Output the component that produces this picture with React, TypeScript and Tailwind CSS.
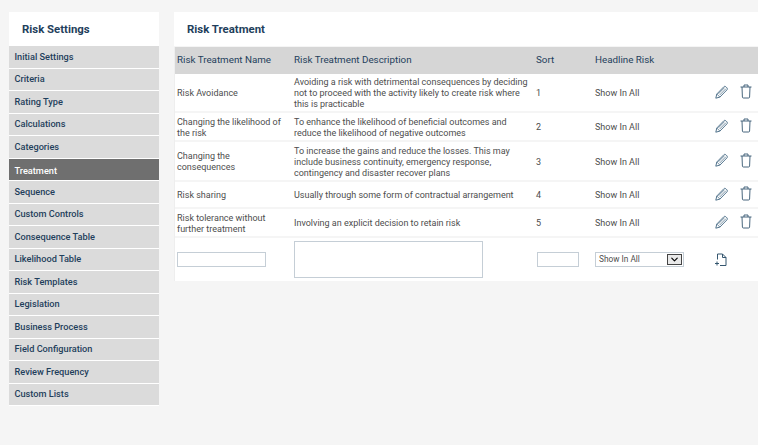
import { ChevronDown } from "lucide-react";

const settings = [
  "Initial Settings",
  "Criteria",
  "Rating Type",
  "Calculations",
  "Categories",
  "Treatment",
  "Sequence",
  "Custom Controls",
  "Consequence Table",
  "Likelihood Table",
  "Risk Templates",
  "Legislation",
  "Business Process",
  "Field Configuration",
  "Review Frequency",
  "Custom Lists",
];

const treatments = [
  {
    name: "Risk Avoidance",
    description:
      "Avoiding a risk with detrimental consequences by deciding not to proceed with the activity likely to create risk where this is practicable",
    sort: 1,
    height: "h-[39px]",
  },
  {
    name: "Changing the likelihood of the risk",
    description: "To enhance the likelihood of beneficial outcomes and reduce the likelihood of negative outcomes",
    sort: 2,
    height: "h-[29px]",
  },
  {
    name: "Changing the consequences",
    description:
      "To increase the gains and reduce the losses. This may include business continuity, emergency response, contingency and disaster recover plans",
    sort: 3,
    height: "h-[40px]",
  },
  {
    name: "Risk sharing",
    description: "Usually through some form of contractual arrangement",
    sort: 4,
    height: "h-[27px]",
  },
  {
    name: "Risk tolerance without further treatment",
    description: "Involving an explicit decision to retain risk",
    sort: 5,
    height: "h-[29px]",
  },
];

function EditIcon() {
  return (
    <svg width="13" height="14" viewBox="0 0 13 14" fill="none" stroke="#3f6480" strokeWidth="0.9">
      <path d="M0.8 13.2l1-4.2 7-7.2c.6-.6 1.5-.6 2.1 0l1 1c.6.6.6 1.5 0 2.1l-7 7.2z" />
      <path d="M1.8 9l3.1 3.1M3.4 8.9l6.3-6.4M4.6 10.1l6.3-6.4" strokeWidth="0.7" />
    </svg>
  );
}

function DeleteIcon() {
  return (
    <svg width="12" height="15" viewBox="0 0 12 15" fill="none" stroke="#34566f" strokeWidth="0.9">
      <path d="M0.5 3h11" />
      <path d="M4 3V1h4v2" />
      <path d="M2 3l.4 10c0 .6.4 1 1 1h5.2c.6 0 1-.4 1-1L10 3" />
    </svg>
  );
}

function AddIcon() {
  return (
    <svg width="12" height="14" viewBox="0 0 12 14" fill="none" stroke="#34566f" strokeWidth="1">
      <path d="M2.5 6.5V1h5l3.5 3.5V12.5H5" />
      <path d="M7.5 1v3.5H11" />
      <path d="M0 10.5h4M2 8.5v4" />
    </svg>
  );
}

export default function App() {
  return (
    <div className="h-[445px] w-[758px] overflow-hidden bg-[#f5f5f5] pt-3 pl-[9px] font-['Roboto',sans-serif] flex items-start gap-[15px]">
      {/* Left menu */}
      <div className="w-[150px] shrink-0">
        <div className="h-[34px] bg-white pl-[13px] pt-px flex items-center text-[11.4px] font-bold text-[#1f3f5c]">
          Risk Settings
        </div>
        {settings.map((s) => (
          <div
            key={s}
            className={`h-[22.5px] border-b border-white pl-[5.5px] flex items-center text-[9.2px] font-medium ${
              s === "Treatment" ? "bg-[#6f6f6f] pt-[3px] text-white" : "bg-[#dbdbdb] text-[#1f3f5c]"
            }`}
          >
            {s}
          </div>
        ))}
      </div>

      {/* Main panel */}
      <div className="w-[584px] shrink-0">
        <div className="h-[34px] bg-white pl-[13px] pt-px flex items-center text-[11.4px] font-bold text-[#1f3f5c]">
          Risk Treatment
        </div>
        <div className="border-l border-[#eeeeee] bg-white">
          <div className="h-[27px] mt-px bg-[#d6d6d6] flex items-center pl-[2px] text-[9.8px] text-[#1f3f5c]">
            <div className="w-[117px]">Risk Treatment Name</div>
            <div className="w-[242px]">Risk Treatment Description</div>
            <div className="w-[59px]">Sort</div>
            <div>Headline Risk</div>
          </div>
          {treatments.map((t) => (
            <div
              key={t.sort}
              className={`${t.height} border-b-2 border-[#f5f5f5] flex items-center pl-[2px] pt-[2px] text-[9px] leading-[11px] text-[#4d4d4d]`}
            >
              <div className="w-[117px] pr-2">{t.name}</div>
              <div className="w-[242px] pr-[3px]">{t.description}</div>
              <div className="w-[59px]">{t.sort}</div>
              <div className="w-[120px]">Show In All</div>
              <div className="-mt-[4px] flex items-center gap-[12px]">
                <EditIcon />
                <DeleteIcon />
              </div>
            </div>
          ))}
          {/* Add row */}
          <div className="h-[43px] flex items-center pl-[2px]">
            <div className="w-[117px]">
              <input className="block h-[15px] w-[89px] border border-[#c5ced6] bg-white" />
            </div>
            <div className="w-[242px]">
              <textarea className="block h-[37px] w-[189px] resize-none border border-[#c5ced6] bg-white" />
            </div>
            <div className="w-[59px]">
              <input className="ml-px block h-[15px] w-[42px] border border-[#c5ced6] bg-white" />
            </div>
            <div className="w-[120px]">
              <div className="h-[15px] w-[89px] border border-[#c5ced6] flex items-center justify-between pl-[3px] pr-px text-[8.3px] text-[#4d4d4d]">
                Show In All
                <span className="h-[11px] w-[15px] border border-[#444444] bg-[#e9e9e9] flex items-center justify-center">
                  <ChevronDown size={11} strokeWidth={2.5} className="text-black" />
                </span>
              </div>
            </div>
            <AddIcon />
          </div>
        </div>
      </div>
    </div>
  );
}
